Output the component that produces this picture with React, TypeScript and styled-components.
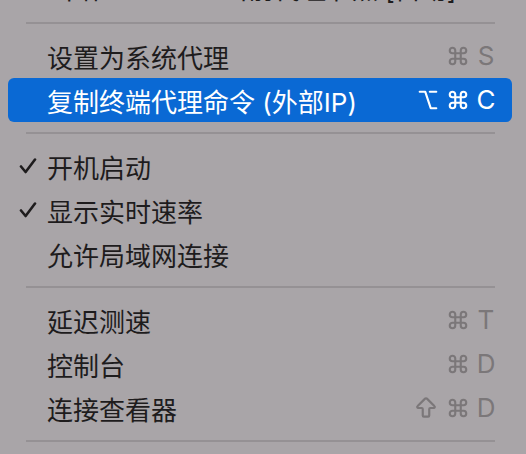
import styled, { createGlobalStyle } from "styled-components";
import { Command, Option, ArrowBigUp } from "lucide-react";

const GlobalStyle = createGlobalStyle`
  html, body {
    margin: 0;
    padding: 0;
    background: #a9a5a8;
    overflow: hidden;
  }
`;

const StyledMenu = styled.div`
  width: 526px;
  height: 454px;
  overflow: hidden;
  padding: 0 14px 0 8px;
  box-sizing: border-box;
  background: #a9a5a8;
  font-family: Inter, "Noto Sans CJK SC", sans-serif;
  color: #1e1c1d;
`;

const MenuList = styled.div`
  display: flex;
  flex-direction: column;
  margin-top: -32px;
`;

const Row = styled.div<{ $active?: boolean }>`
  height: 44px;
  display: flex;
  align-items: center;
  padding: 0 17px 0 11px;
  box-sizing: border-box;
  border-radius: 6px;
  font-size: 26px;
  background: ${({ $active }) => ($active ? "#0a69d4" : "transparent")};
  color: ${({ $active }) => ($active ? "#ffffff" : "#1e1c1d")};
`;

const TopRow = styled(Row)`
  padding-bottom: 6px;
`;

const CheckSlot = styled.div`
  width: 28px;
  flex-shrink: 0;
  display: flex;
  align-items: center;
`;

const Label = styled.div`
  flex: 1;
  white-space: nowrap;
  display: flex;
  align-items: center;
`;

const Dot = styled.span`
  display: inline-block;
  width: 13px;
  height: 13px;
  border-radius: 50%;
  background: #7a1414;
  margin: 0 30px 0 80px;
`;

const Keys = styled.div<{ $active?: boolean }>`
  display: flex;
  align-items: center;
  gap: 8px;
  color: ${({ $active }) => ($active ? "#ffffff" : "#7b7779")};
  font-family: Inter, sans-serif;
  font-size: 26px;
  line-height: 1;
`;

const Key = styled.span`
  display: inline-flex;
  width: 18px;
  justify-content: center;
`;

const Separator = styled.div`
  padding: 10px 17px 10px 18px;

  &::after {
    content: "";
    display: block;
    height: 2px;
    background: #959194;
  }
`;

const Tick = () => (
  <svg width="18" height="16" viewBox="0 0 18 16">
    <path d="M2 8.5 L6.6 14 L16 1.5" fill="none" stroke="currentColor" strokeWidth="2.6" strokeLinecap="round" strokeLinejoin="round" />
  </svg>
);

type Shortcut = "cmd" | "opt" | "shift" | string;

const renderKey = (k: Shortcut, i: number) => {
  if (k === "cmd") return <Command key={i} size={22} strokeWidth={2.3} />;
  if (k === "opt") return <Option key={i} size={22} strokeWidth={2.4} />;
  if (k === "shift") return <ArrowBigUp key={i} size={26} strokeWidth={2} />;
  return <Key key={i}>{k}</Key>;
};

type Item = { label: string; checked?: boolean; keys?: Shortcut[]; active?: boolean };

const MenuRow = ({ label, checked, keys, active }: Item) => (
  <Row $active={active}>
    <CheckSlot>{checked && <Tick />}</CheckSlot>
    <Label>{label}</Label>
    {keys && <Keys $active={active}>{keys.map(renderKey)}</Keys>}
  </Row>
);

const groups: Item[][] = [
  [
    { label: "设置为系统代理", keys: ["cmd", "S"] },
    { label: "复制终端代理命令 (外部IP)", keys: ["opt", "cmd", "C"], active: true },
  ],
  [
    { label: "开机启动", checked: true },
    { label: "显示实时速率", checked: true },
    { label: "允许局域网连接" },
  ],
  [
    { label: "延迟测速", keys: ["cmd", "T"] },
    { label: "控制台", keys: ["cmd", "D"] },
    { label: "连接查看器", keys: ["shift", "cmd", "D"] },
  ],
];

export default function App() {
  return (
    <>
      <GlobalStyle />
      <StyledMenu>
        <MenuList>
          <TopRow>
            <CheckSlot />
            <Label>
              出站
              <Dot />
              当前代理节点 [自动]
            </Label>
          </TopRow>
          {groups.map((group, gi) => (
            <div key={gi}>
              <Separator />
              {group.map((item) => (
                <MenuRow key={item.label} {...item} />
              ))}
            </div>
          ))}
          <Separator />
        </MenuList>
      </StyledMenu>
    </>
  );
}
